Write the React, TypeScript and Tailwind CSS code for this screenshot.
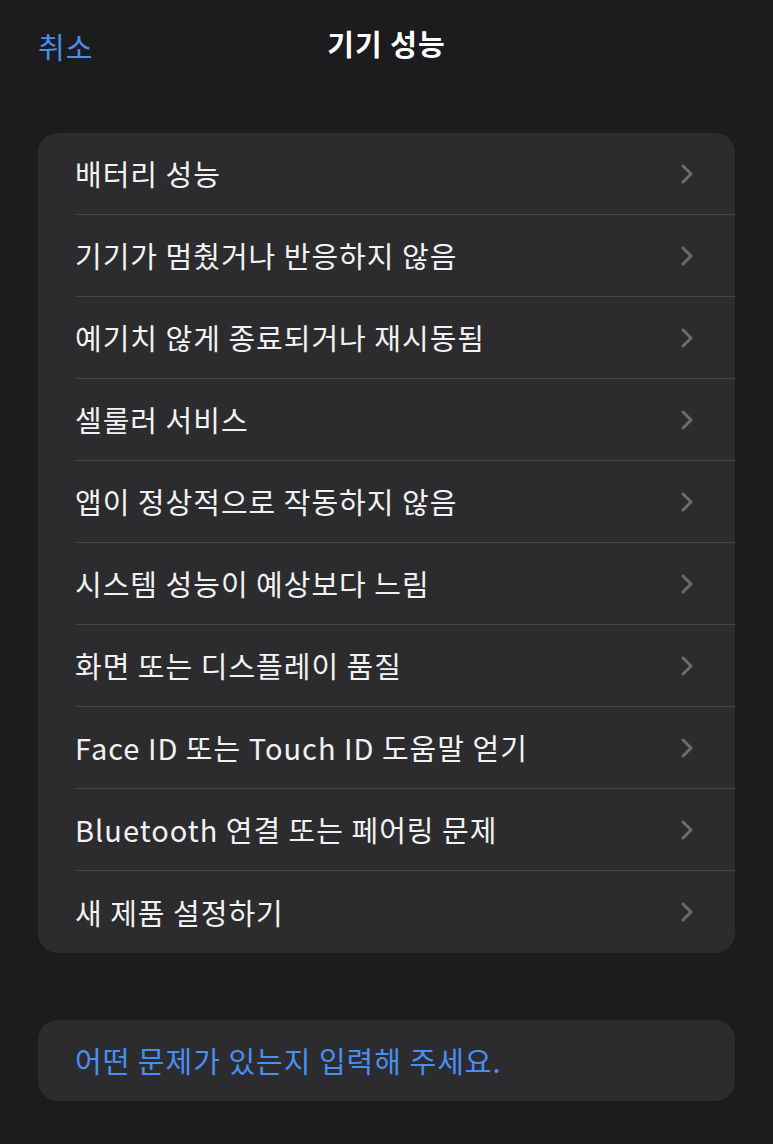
import React from 'react';

const items = [
    '배터리 성능',
    '기기가 멈췄거나 반응하지 않음',
    '예기치 않게 종료되거나 재시동됨',
    '셀룰러 서비스',
    '앱이 정상적으로 작동하지 않음',
    '시스템 성능이 예상보다 느림',
    '화면 또는 디스플레이 품질',
    'Face ID 또는 Touch ID 도움말 얻기',
    'Bluetooth 연결 또는 페어링 문제',
    '새 제품 설정하기',
];

const Chevron = () => (
    <svg width="16" height="26" viewBox="0 0 16 26" fill="none">
        <path d="M4 5l8 8-8 8" stroke="#6c6c70" strokeWidth="3" strokeLinecap="round" strokeLinejoin="round" />
    </svg>
);

const App = () => {
    return (
        <div
            className="w-[773px] h-[1144px] bg-[#1c1c1e] text-white overflow-hidden"
            style={{ fontFamily: '"Noto Sans CJK KR", "Noto Sans", sans-serif' }}
        >
            {/* Nav bar */}
            <header className="relative h-[92px] flex items-center justify-center">
                <span className="absolute left-[38px] top-[25px] text-[29px] tracking-[1px] text-[#4a8ef0]">취소</span>
                <h1 className="text-[29px] font-semibold tracking-[1px] mt-[-4px]">기기 성능</h1>
            </header>

            {/* Options list */}
            <div className="mx-[38px] mt-[41px] rounded-[20px] bg-[#2c2c2e] overflow-hidden">
                {items.map((label, i) => (
                    <div key={label} className="pl-[37px] h-[82px] flex flex-col">
                        <div className="flex-1 flex items-center justify-between pr-[40px]">
                            <span className="text-[29px] leading-none tracking-[1px] text-[#f2f2f2]">{label}</span>
                            <Chevron />
                        </div>
                        {i < items.length - 1 && <div className="h-px bg-[#444446]" />}
                    </div>
                ))}
            </div>

            {/* Free text entry */}
            <div className="mx-[38px] mt-[67px] h-[81px] rounded-[20px] bg-[#2c2c2e] flex items-center pl-[37px]">
                <span className="text-[29px] leading-none tracking-[1px] text-[#4a8ef0]">어떤 문제가 있는지 입력해 주세요.</span>
            </div>
        </div>
    );
};

export default App;
